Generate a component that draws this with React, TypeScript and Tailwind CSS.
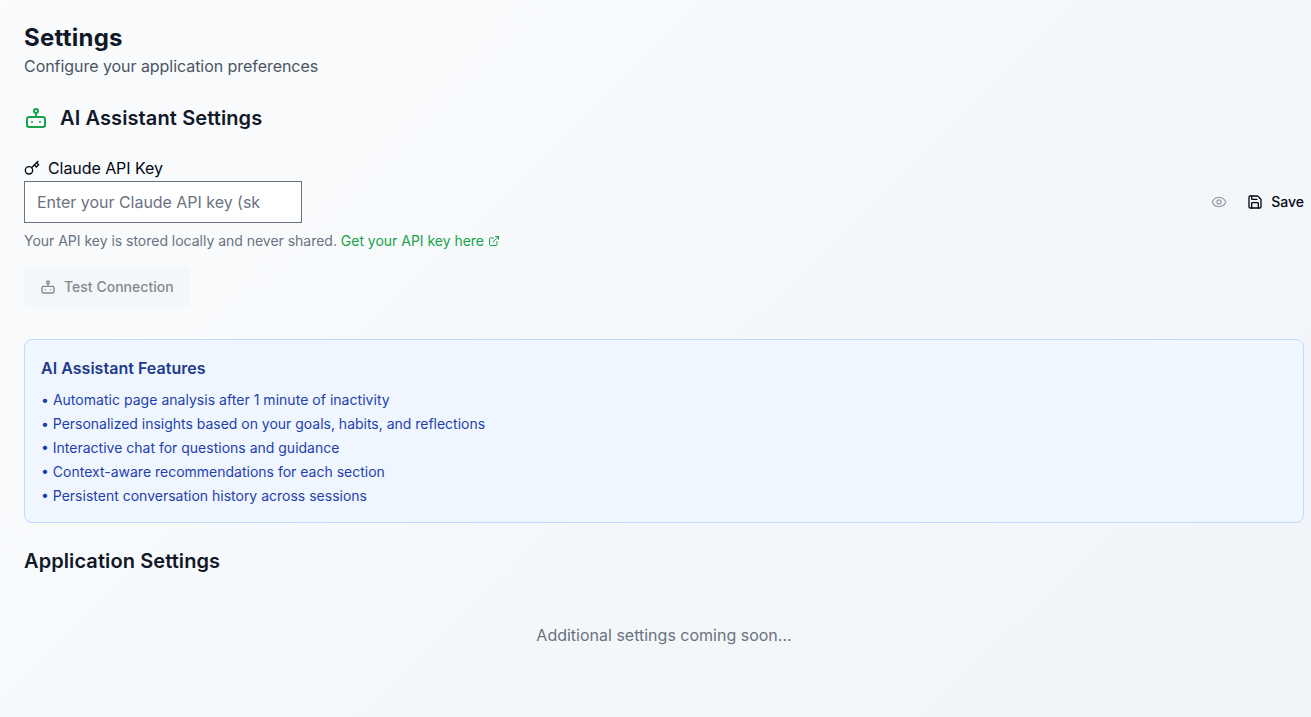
import { Eye, Save, ExternalLink } from "lucide-react";

function Robot({ className }: { className: string }) {
  return (
    <svg viewBox="0 0 24 24" fill="none" stroke="currentColor" strokeWidth={2} strokeLinecap="round" strokeLinejoin="round" className={className}>
      <rect x="3" y="11" width="18" height="10" rx="2" />
      <circle cx="12" cy="5" r="2" />
      <path d="M12 7v4M8 16v0M16 16v0" />
    </svg>
  );
}

function KeyIcon({ className }: { className: string }) {
  return (
    <svg viewBox="0 0 24 24" fill="none" stroke="currentColor" strokeWidth={2} strokeLinecap="round" strokeLinejoin="round" className={className}>
      <circle cx="7.5" cy="15.5" r="5.5" />
      <path d="m21 2-9.6 9.6" />
      <path d="m15.5 7.5 3 3L22 7l-3-3" />
    </svg>
  );
}

const features = [
  "Automatic page analysis after 1 minute of inactivity",
  "Personalized insights based on your goals, habits, and reflections",
  "Interactive chat for questions and guidance",
  "Context-aware recommendations for each section",
  "Persistent conversation history across sessions",
];

export default function App() {
  return (
    <div className="h-[717px] overflow-hidden bg-[linear-gradient(135deg,#f9fbfd_0%,#f8fafc_25%,#f1f5f9_90%,#f0f3f8_100%)] pt-6 pr-[7px] pl-6 font-['Inter',sans-serif] text-base text-gray-950">
      <h1 className="text-2xl leading-[27px] font-bold tracking-[0.25px] text-[#111827]">Settings</h1>
      <p className="mt-[3px] leading-6 tracking-[-0.05px] text-[#4b5563]">Configure your application preferences</p>

      <div className="mt-6 flex h-8 items-center gap-3">
        <Robot className="size-6 text-[#16a34a]" />
        <h2 className="text-xl font-semibold tracking-[0.11px] text-[#111827]">AI Assistant Settings</h2>
      </div>

      <div className="mt-[22px] flex h-6 items-center gap-2">
        <KeyIcon className="size-4" />
        <label htmlFor="key" className="tracking-[-0.07px]">Claude API Key</label>
      </div>
      <div className="mt-px flex h-[42px] items-center justify-between">
        <input id="key" className="h-[42px] w-[278px] border border-[#6b7280] bg-white px-3 tracking-[-0.03px] placeholder:text-[#6b7280]" placeholder="Enter your Claude API key (sk" />
        <div className="flex items-center">
          <button className="mr-5 text-[#9ca3af]"><Eye className="size-4" /></button>
          <button className="flex items-center gap-2 text-sm font-medium"><Save className="size-4" />Save</button>
        </div>
      </div>
      <p className="mt-2 flex h-5 items-center text-sm tracking-[-0.02px] text-[#6b7280]">
        Your API key is stored locally and never shared.&nbsp;
        <a className="flex items-center gap-1 text-[#16a34a]">Get your API key here <ExternalLink className="size-3" /></a>
      </p>
      <button className="mt-4 flex h-10 w-[166px] items-center gap-2 rounded-md bg-[#f4f7fa] px-4 text-sm font-medium tracking-[0.02px] text-[#85888e]">
        <Robot className="size-4" />Test Connection
      </button>

      <section className="mt-8 h-[184px] rounded-lg border border-[#bfdbfe] bg-[#eff6ff] p-4">
        <h3 className="leading-6 font-semibold tracking-[0.03px] text-[#1e3a8a]">AI Assistant Features</h3>
        <ul className="mt-2 text-sm leading-6 text-[#1e40af]">
          <li className="tracking-[0.03px]">• {features[0]}</li>
          <li className="tracking-[-0.015px]">• {features[1]}</li>
          {features.slice(2).map((f) => <li key={f}>• {f}</li>)}
        </ul>
      </section>
      <h2 className="mt-6 text-xl font-semibold tracking-[0.09px] text-[#111827]">Application Settings</h2>
      <p className="mt-12 text-center text-[#6b7280]">Additional settings coming soon...</p>
    </div>
  );
}
